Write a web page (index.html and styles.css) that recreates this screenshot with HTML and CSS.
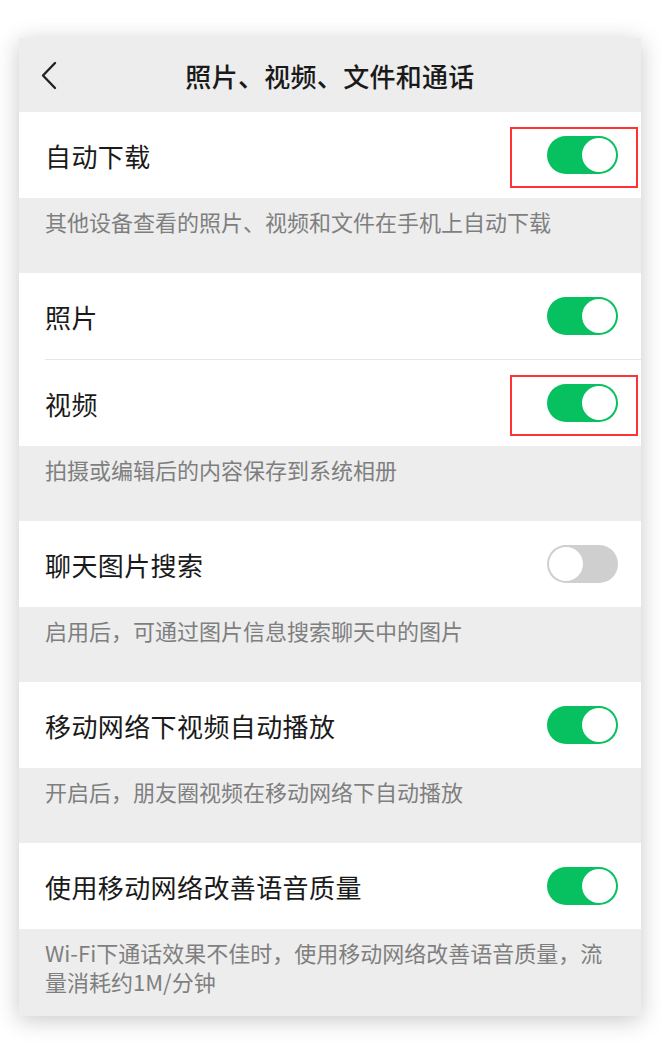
FILE: index.html
```html
<!DOCTYPE html>
<html>
<head>
  <title>照片、视频、文件和通话</title>
  <link rel="stylesheet" href="styles.css">
</head>
<body>
  <div class="screen">
    <div class="header">
      <svg class="back" width="20" height="30" viewBox="0 0 20 30">
        <polyline points="14,3 2,15.5 14,28" fill="none" stroke="#222" stroke-width="2.4" stroke-linecap="round" stroke-linejoin="round"/>
      </svg>
      <h1>照片、视频、文件和通话</h1>
    </div>

    <div class="group">
      <div class="row">
        <span class="label">自动下载</span>
        <span class="switch on marked"></span>
      </div>
    </div>
    <p class="desc">其他设备查看的照片、视频和文件在手机上自动下载</p>

    <div class="group">
      <div class="row">
        <span class="label">照片</span>
        <span class="switch on"></span>
      </div>
      <div class="row">
        <span class="label">视频</span>
        <span class="switch on marked"></span>
      </div>
    </div>
    <p class="desc">拍摄或编辑后的内容保存到系统相册</p>

    <div class="group">
      <div class="row">
        <span class="label">聊天图片搜索</span>
        <span class="switch"></span>
      </div>
    </div>
    <p class="desc">启用后，可通过图片信息搜索聊天中的图片</p>

    <div class="group">
      <div class="row">
        <span class="label">移动网络下视频自动播放</span>
        <span class="switch on"></span>
      </div>
    </div>
    <p class="desc">开启后，朋友圈视频在移动网络下自动播放</p>

    <div class="group">
      <div class="row">
        <span class="label">使用移动网络改善语音质量</span>
        <span class="switch on"></span>
      </div>
    </div>
    <p class="desc last">Wi-Fi下通话效果不佳时，使用移动网络改善语音质量，流量消耗约1M/分钟</p>
  </div>
</body>
</html>
```

FILE: styles.css
```css
body {
  margin: 0;
  padding: 38px 20px 40px 19px;
  background: #fff;
  font-family: "Noto Sans CJK SC", "Noto Sans", sans-serif;
}

.screen {
  background: #ededed;
  box-shadow: 0 4px 22px rgba(0, 0, 0, 0.22);
}

.header {
  position: relative;
  height: 74px;
  display: flex;
  align-items: center;
  justify-content: center;
}

.back {
  position: absolute;
  left: 22px;
  top: 22px;
}

.header h1 {
  margin: 0;
  font-size: 26px;
  font-weight: 500;
  color: #1a1a1a;
  letter-spacing: 0.3px;
}

.group {
  background: #fff;
}

.row {
  position: relative;
  height: 86px;
  margin-left: 26px;
  padding-right: 23px;
  display: flex;
  align-items: center;
  justify-content: space-between;
}

.row + .row {
  border-top: 1px solid #e6e6e6;
}

.label {
  font-size: 26px;
  color: #1a1a1a;
  letter-spacing: 0.4px;
}

.switch {
  position: relative;
  width: 71px;
  height: 38px;
  border-radius: 19px;
  background: #cfcfcf;
  box-sizing: border-box;
}

.switch::after {
  content: "";
  position: absolute;
  top: 2px;
  left: 2px;
  width: 34px;
  height: 34px;
  border-radius: 50%;
  background: #fff;
  box-sizing: border-box;
}

.switch.on {
  background: #07c160;
}

.switch.on::after {
  left: 35px;
}

.switch.marked::before {
  content: "";
  position: absolute;
  left: -37px;
  top: -9px;
  width: 128px;
  height: 61px;
  border: 2px solid #f33;
  box-sizing: border-box;
}

.desc {
  margin: 0;
  padding: 9px 24px 37px 26px;
  font-size: 22px;
  line-height: 29px;
  color: #7f7f7f;
}

.desc.last {
  padding-bottom: 20px;
}
```
